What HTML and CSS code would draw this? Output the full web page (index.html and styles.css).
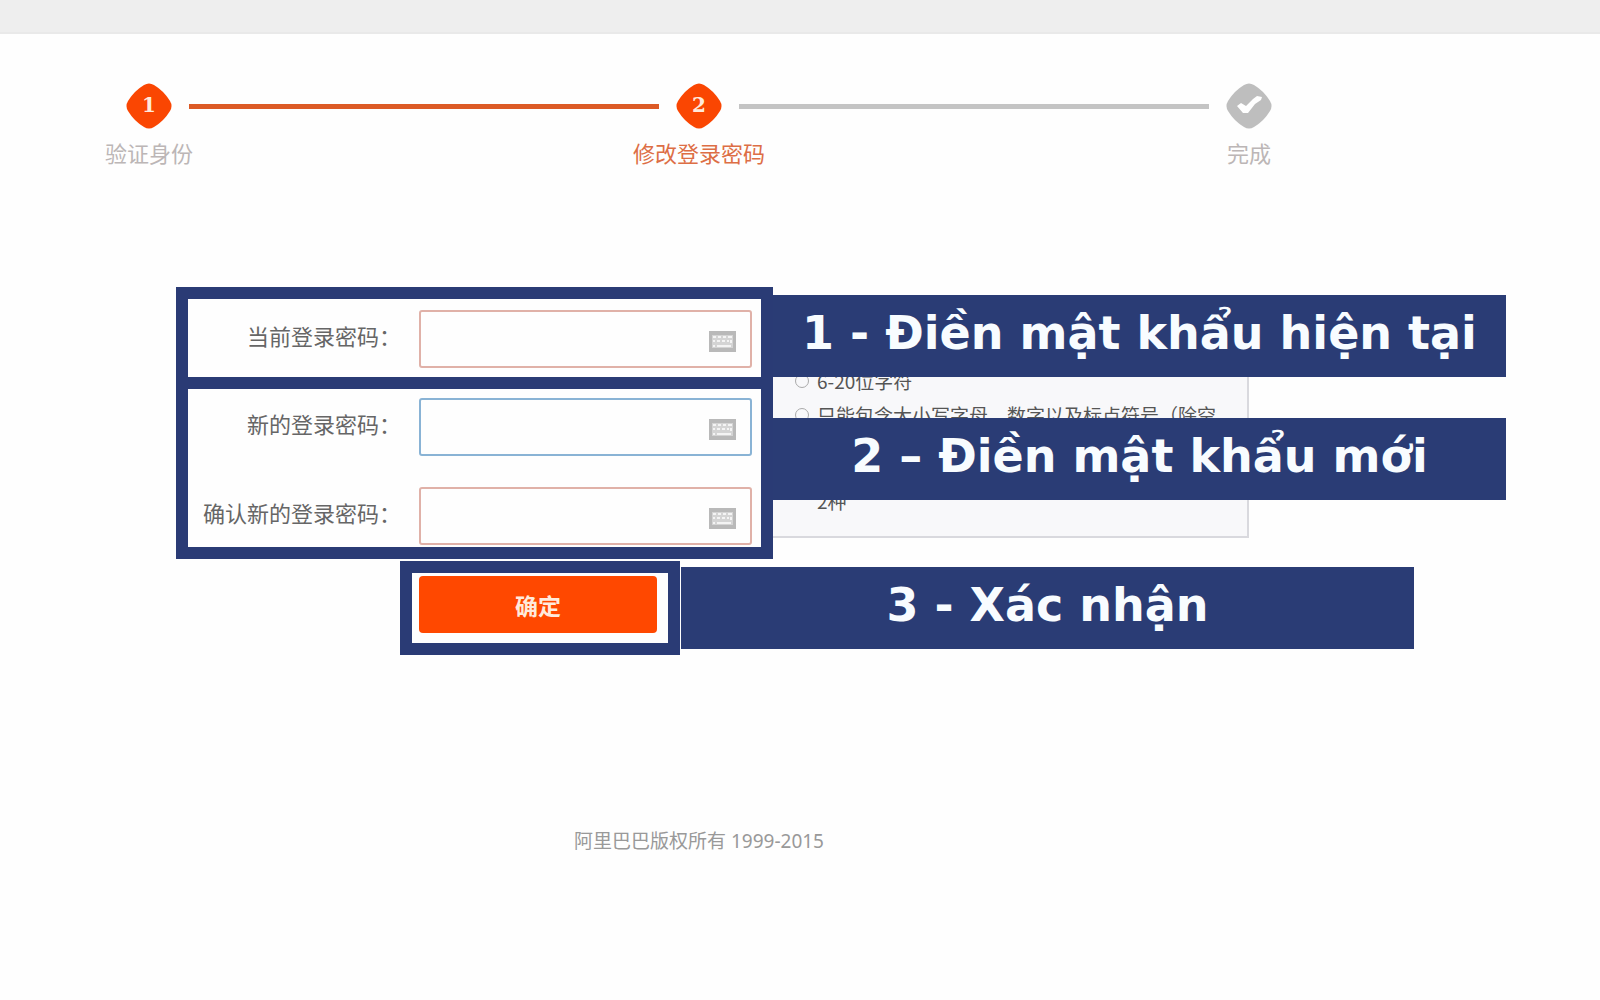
FILE: index.html
```html
<!DOCTYPE html>
<html lang="zh-CN">
<head>
    <meta charset="UTF-8">
    <meta name="viewport" content="width=device-width, initial-scale=1.0">
    <title>修改登录密码</title>
    <link rel="stylesheet" href="styles.css">
</head>
<body>
    <header class="topbar"></header>

    <main>
        <!-- Progress -->
        <div class="steps">
            <svg class="diamond" viewBox="0 0 46 46"><path d="M18 2Q23-1 28 2Q38 8 44 18Q47 23 44 28Q38 38 28 44Q23 47 18 44Q8 38 2 28Q-1 23 2 18Q8 8 18 2Z" fill="#fa4602"/><text x="23" y="29" text-anchor="middle">1</text></svg>
            <div class="line active"></div>
            <svg class="diamond" viewBox="0 0 46 46"><path d="M18 2Q23-1 28 2Q38 8 44 18Q47 23 44 28Q38 38 28 44Q23 47 18 44Q8 38 2 28Q-1 23 2 18Q8 8 18 2Z" fill="#fa4602"/><text x="23" y="29" text-anchor="middle">2</text></svg>
            <div class="line"></div>
            <svg class="diamond" viewBox="0 0 46 46"><path d="M18 2Q23-1 28 2Q38 8 44 18Q47 23 44 28Q38 38 28 44Q23 47 18 44Q8 38 2 28Q-1 23 2 18Q8 8 18 2Z" fill="#bebebe"/><path d="M11 23L15 20L20 23L27 16L31 13L36 14L35 17L29 21L22 30L17 30Z" fill="#fff"/></svg>
            <span class="step-name first">验证身份</span>
            <span class="step-name second">修改登录密码</span>
            <span class="step-name third">完成</span>
        </div>

        <form>
            <div class="guide">
                <div class="frames">
                    <div class="frame current">
                        <div class="row">
                            <label for="oldPassword">当前登录密码：</label>
                            <div class="field">
                                <input type="password" id="oldPassword">
                                <svg class="keyboard" viewBox="0 0 27 21"><path d="M0 0H27V21H0Z" fill="#b9b9b9"/><path d="M3 4H24V17H3Z" fill="#d4d4d4"/><path d="M4 6H7M9 6H12M14 6H17M19 6H23M4 10H6M8 10H11M13 10H16M18 10H20M22 9V12M4 15H6M8 15H22" stroke="#f4f4f4" stroke-width="2"/></svg>
                            </div>
                        </div>
                    </div>
                    <div class="frame new">
                        <div class="row">
                            <label for="newPassword">新的登录密码：</label>
                            <div class="field">
                                <input type="password" id="newPassword" class="focused">
                                <svg class="keyboard" viewBox="0 0 27 21"><path d="M0 0H27V21H0Z" fill="#b9b9b9"/><path d="M3 4H24V17H3Z" fill="#d4d4d4"/><path d="M4 6H7M9 6H12M14 6H17M19 6H23M4 10H6M8 10H11M13 10H16M18 10H20M22 9V12M4 15H6M8 15H22" stroke="#f4f4f4" stroke-width="2"/></svg>
                            </div>
                        </div>
                        <div class="row">
                            <label for="confirmPassword">确认新的登录密码：</label>
                            <div class="field">
                                <input type="password" id="confirmPassword">
                                <svg class="keyboard" viewBox="0 0 27 21"><path d="M0 0H27V21H0Z" fill="#b9b9b9"/><path d="M3 4H24V17H3Z" fill="#d4d4d4"/><path d="M4 6H7M9 6H12M14 6H17M19 6H23M4 10H6M8 10H11M13 10H16M18 10H20M22 9V12M4 15H6M8 15H22" stroke="#f4f4f4" stroke-width="2"/></svg>
                            </div>
                        </div>
                    </div>
                </div>
                <div class="notes">
                    <!-- Password rules, partly behind the banners -->
                    <ul class="tips">
                        <li>6-20位字符</li>
                        <li>只能包含大小写字母、数字以及标点符号（除空格）</li>
                        <li>大写字母、小写字母、数字和标点符号至少含<span class="count">2种</span></li>
                    </ul>
                    <div class="banner" lang="vi">1 - Điền mật khẩu hiện tại</div>
                    <div class="banner" lang="vi">2 – Điền mật khẩu mới</div>
                </div>
            </div>

            <div class="submit">
                <div class="frame confirm">
                    <button type="button">确定</button>
                </div>
                <div class="banner" lang="vi">3 - Xác nhận</div>
            </div>
        </form>
    </main>

    <footer>阿里巴巴版权所有 1999-2015</footer>
</body>
</html>
```
FILE: styles.css
```css
* {
    box-sizing: border-box;
}
body {
    margin: 0;
    background: #fefefe;
    font-family: "Noto Sans CJK SC", sans-serif;
    font-size: 22px;
    color: #666;
}
.topbar {
    height: 34px;
    background: #eee;
    border-bottom: 2px solid #e9e9e9;
}

/* progress steps */
.steps {
    display: grid;
    grid-template-columns: 46px 1fr 46px 1fr 46px;
    column-gap: 17px;
    row-gap: 8px;
    align-items: center;
    margin: 49px 328px 0 126px;
}
.diamond {
    width: 46px;
    height: 46px;
}
.diamond text {
    font-family: "DejaVu Serif", serif;
    font-size: 20px;
    font-weight: bold;
    fill: #ffe9dc;
}
.line {
    height: 5px;
    background: #c4c4c4;
}
.line.active {
    background: #dc5a25;
}
.step-name {
    justify-self: center;
    white-space: nowrap;
    line-height: 30px;
    color: #bcb6b6;
}
.first {
    grid-column: 1;
}
.second {
    grid-column: 3;
    color: #dd6e45;
}
.third {
    grid-column: 5;
}

/* form */
.guide {
    display: flex;
    margin: 120px 94px 0 176px;
}
.frames {
    width: 597px;
}
.frame {
    border: 12px solid #2a3b75;
    background: #fefefe;
}
.current {
    padding: 11px 9px 9px;
}
.new {
    display: grid;
    gap: 31px;
    border-top: 0;
    padding: 9px 9px 2px;
}
.row {
    display: flex;
    align-items: center;
    justify-content: flex-end;
    gap: 18px;
}
label {
    padding-bottom: 8px;
    line-height: 30px;
}
.field {
    position: relative;
    width: 333px;
}
input {
    display: block;
    width: 100%;
    height: 58px;
    padding: 0 50px 0 12px;
    border: 2px solid #e0b1a8;
    border-radius: 3px;
    background: #fefefe;
    font-size: 22px;
    outline: none;
}
input.focused {
    border-color: #89b3d5;
}
.keyboard {
    position: absolute;
    right: 16px;
    bottom: 16px;
    width: 27px;
    height: 21px;
}

/* banners and rules */
.notes {
    position: relative;
    flex: 1;
    display: flex;
    flex-direction: column;
    gap: 41px;
    padding-top: 8px;
}
.banner {
    position: relative;
    height: 82px;
    background: #2a3c75;
    color: #f8fcff;
    font-family: "DejaVu Sans", sans-serif;
    font-size: 46px;
    font-weight: bold;
    line-height: 76px;
    text-align: center;
    white-space: nowrap;
}
.tips {
    position: absolute;
    left: 0;
    bottom: 21px;
    width: 476px;
    margin: 0;
    padding: 14px 24px 22px 44px;
    border: 2px solid #d9d9de;
    border-left: 0;
    background: #f8f8fa;
    list-style: none;
    font-size: 19px;
    line-height: 26px;
    color: #555;
}
.tips li {
    position: relative;
}
.tips li + li {
    margin-top: 8px;
}
.tips li::before {
    content: "";
    position: absolute;
    left: -22px;
    top: 6px;
    width: 12px;
    height: 12px;
    border: 1px solid #aaa;
    border-radius: 50%;
}
.count {
    display: inline-block;
    white-space: nowrap;
}

.submit {
    display: flex;
    align-items: center;
    margin: 2px 186px 0 400px;
}
.submit .banner {
    flex: 1;
    margin-left: 1px;
}
.confirm {
    width: 280px;
    padding: 3px 11px 10px 7px;
}
button {
    display: block;
    width: 100%;
    height: 57px;
    border: 0;
    border-radius: 4px;
    background: #ff4800;
    color: #ffeadc;
    font-family: inherit;
    font-size: 23px;
    font-weight: bold;
    cursor: pointer;
}

footer {
    margin: 171px 202px 0 0;
    text-align: center;
    font-family: "Noto Sans", "Noto Sans CJK SC", sans-serif;
    font-size: 19px;
    line-height: 30px;
    color: #999;
}
```
